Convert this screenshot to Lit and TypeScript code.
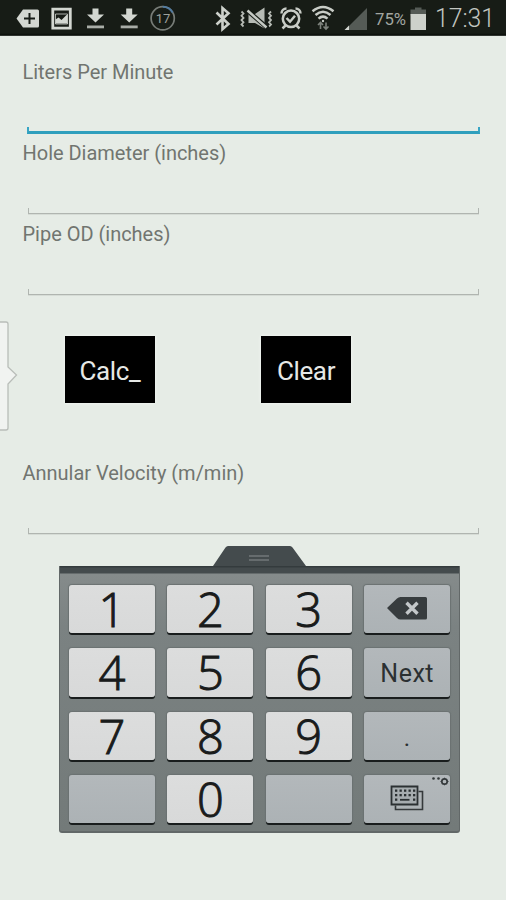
import { LitElement, html, css, svg } from "lit";
import { customElement } from "lit/decorators.js";

@customElement("status-bar")
class StatusBar extends LitElement {
  static styles = css`
    :host { display: block; height: 36px; background: linear-gradient(#171c16 0 33px, #0a0e0a 35px, #555a55 36px); }
    svg { display: block; }
    .txt { font-family: Roboto, sans-serif; }
  `;
  render() {
    const download = (x: number) => svg`<g transform="translate(${x} 0)">
      <path d="M-3 8.500h6v6h5.500L0 22.500-8.500 14.500H-3z" fill="#d3d7d1"/><path d="M-8.500 25.500h17v2.800h-17z" fill="#a9ada7"/></g>`;
    return html`<svg width="506" height="36" viewBox="0 0 506 36">
      <path d="M23 9.500h14.500q1.500 0 1.500 1.500v15q0 1.500-1.500 1.500H23l-6.500-9z" fill="#d3d7d1"/>
      <path d="M29.500 13v11M24 18.500h11" stroke="#171c16" stroke-width="2"/>
      <path d="M52.800 9.200h17.500v19H52.800z" fill="none" stroke="#d3d7d1" stroke-width="2.800"/>
      <path d="M55.500 14h12v10h-12z" fill="none" stroke="#d3d7d1" stroke-width=".8"/>
      <path d="M55.500 23.500v-4l3-2 3 2.500 5-5h1v8.500z" fill="#d3d7d1"/>
      ${download(95.500)}${download(129.200)}
      <circle cx="162.700" cy="18.300" r="11.600" fill="none" stroke="#777c77" stroke-width="1.700"/>
      <path d="M162.700 6.700a11.600 11.600 0 0 1 10 5.800" fill="none" stroke="#527ba0" stroke-width="1.900"/>
      <text class="txt" x="163" y="23" font-size="13" text-anchor="middle" fill="#9da19c">17</text>
      <path d="M216.500 12.500l12 11.500-6 5.200V8l6 5.200-12 11.300" fill="none" stroke="#cdd1cb" stroke-width="2.600"/>
      <path d="M241.500 11.500l2 2-2 2.200 2 2.200-2 2.200 2 2.200-2 2.200 2 2M271 11.500l-2 2 2 2.200-2 2.200 2 2.200-2 2.200 2 2.200-2 2" stroke="#b6bab4" fill="none" stroke-width="1.800"/>
      <path d="M248.500 14h6.500l9.500-6.500V28.500L255 23h-6.500z" fill="#b6bab4"/>
      <path d="M245.500 9l22 19" stroke="#171c16" stroke-width="4.500"/><path d="M247.500 10.500l19 17" stroke="#c6cac4" stroke-width="2.500"/>
      <g stroke="#c8ccc6" fill="none" stroke-width="2.500">
        <circle cx="291" cy="18.800" r="8.200"/><path d="M286.500 18l3.500 3.700 5-6M285.500 25.500l-3 3M296.500 25.500l3 3"/>
        <path d="M281.500 13.500a5 5 0 0 1 5-5M300.500 13.500a5 5 0 0 0-5-5"/>
      </g>
      <g stroke="#c8ccc6" fill="none" stroke-width="2.500">
        <path d="M312.500 11.200q10.500-8.500 21 0M315.500 15q7.500-6.500 15 0M318.500 18.600q4.500-4 9 0"/>
        <circle cx="323" cy="21" r="1.200" fill="#c8ccc6" stroke="none"/>
      </g>
      <path d="M320.500 29v-6M318 25l2.500-2.500L323 25M326 22.500v6M323.500 26.500l2.500 2.500 2.500-2.500" stroke="#7d827c" fill="none" stroke-width="1.600"/>
      <path d="M367 8v22h-22z" fill="#555b56"/><path d="M349 25.500V30h-4.500z" fill="#d3d7d1"/>
      <text class="txt" x="375" y="24.700" font-size="16" textLength="31" lengthAdjust="spacingAndGlyphs" fill="#a2a6a1">75%</text>
      <path d="M415 7.500h6.500v2h4.500v6h-15.500v-6h4.500z" fill="#555b56"/><path d="M410.500 14h15.500v16h-15.500z" fill="#cdd1cb"/>
      <text class="txt" x="435" y="27" font-size="26" font-weight="300" textLength="60" lengthAdjust="spacingAndGlyphs" fill="#c3c7c1">17:31</text>
    </svg>`;
  }
}

@customElement("text-field")
class TextField extends LitElement {
  static properties = { label: {}, active: { type: Boolean, reflect: true } };
  declare label: string;
  declare active: boolean;
  static styles = css`
    :host { display: block; height: 81px; font: 20px/24px Roboto, sans-serif; letter-spacing: -.02px; color: #717570; }
    .label { padding-left: 22.500px; height: 67px; }
    .line { margin: 0 28px; height: 6px; box-sizing: border-box; border: 1px solid #b0b5b0; border-top: 0; width: 451px; box-shadow: 0 1px 0 #d6dcd6; }
    :host([active]) .line { margin-left: 27px; width: 453px; border: 2px solid #38a5c4; border-top: 0; border-bottom: 3px solid #2f9fbd; height: 7px; box-shadow: none; }
  `;
  render() {
    return html`<div class="label">${this.label}</div><div class="line"></div>`;
  }
}

@customElement("key-pad")
class KeyPad extends LitElement {
  static styles = css`
    :host { display: block; width: 401px; }
    .tab { display: block; margin-left: 154px; }
    .board { box-sizing: border-box; height: 267px; border: solid #626868; border-width: 0 1px 2px; border-radius: 0 0 3px 3px;
      background: linear-gradient(#343b3d 0 1px, #444b4d 2px 7px, #858b8b 8px, #7b8282 60px, #737a79);
      padding: 19px 9px 0; display: grid; grid-template-columns: repeat(4, 86px); column-gap: 12.400px; grid-auto-rows: 48.300px; row-gap: 15px; }
    .key { border-radius: 3px; background: linear-gradient(#dcdddd, #d8d9d9); box-shadow: 0 2px 0 #191d1d, 0 0 1px 1px #6b7272;
      display: flex; align-items: center; justify-content: center; font: 300 47px/48px "Open Sans", sans-serif; color: #191b1b; -webkit-text-stroke: 1px #191b1b; }
    .fn { background: linear-gradient(#b3b8bb, #acb2b5); font: 25px/48px Roboto, sans-serif; letter-spacing: .5px; color: #2b3032; -webkit-text-stroke: 0; }
    .fn span { transform: translateY(1.500px); }
    .dot { font-size: 24px; }
    .key svg { display: block; }
  `;
  render() {
    const digit = (n: number) => html`<div class="key"><span>${n}</span></div>`;
    const dots = [0, 1, 2].map((r) => [0, 1, 2, 3, 4].map((c) =>
      r === 2 && c > 0 && c < 4 ? "" : svg`<rect x=${31 + c * 4.500} y=${14.500 + r * 4.500} width="2.300" height="2.300" fill="#2b3032"/>`));
    return html`
      <svg class="tab" width="93" height="20" viewBox="0 0 93 20"><path d="M0 20L12.500 1.500q1-1.500 2.500-1.500H77q1.500 0 2.500 1.500L93 20z" fill="#444b4d"/>
        <path d="M36 10h20M36 14h20" stroke="#727879" stroke-width="1.300"/></svg>
      <div class="board">
        ${digit(1)}${digit(2)}${digit(3)}
        <div class="key fn"><svg width="86" height="48"><path d="M23 23L33 13.500q1.500-1.500 3.500-1.500H61.500q1.500 0 1.500 1.500v19.500q0 1.500-1.500 1.500H36.500q-2 0-3.500-1.500z" fill="#373c3e"/>
          <path d="M42.500 17.800l11 11M53.500 17.800l-11 11" stroke="#c3c7c9" stroke-width="3.400"/></svg></div>
        ${digit(4)}${digit(5)}${digit(6)}<div class="key fn"><span>Next</span></div>
        ${digit(7)}${digit(8)}${digit(9)}<div class="key fn dot"><span>.</span></div>
        <div class="key fn"></div>${digit(0)}<div class="key fn"></div>
        <div class="key fn"><svg width="86" height="48"><path d="M54.500 16.500h4v18h-27v-4" fill="none" stroke="#35393b" stroke-width="1.600"/>
          <path d="M27.500 11.500h26v18h-26z" fill="#a6acaf" stroke="#2b3032" stroke-width="1.800"/>${dots}
          <path d="M36 24.800h9.500" stroke="#2b3032" stroke-width="1.800"/>
          <circle cx="69.500" cy="3.500" r="1.300" fill="#34393b"/><circle cx="74.500" cy="3.500" r="1.300" fill="#34393b"/>
          <circle cx="80.500" cy="6.500" r="2.700" fill="none" stroke="#34393b" stroke-width="1.700"/><path d="M76.500 6.500h8M80.500 2.700v7.600" stroke="#34393b" stroke-width="1" stroke-dasharray="1.500 5"/></svg></div>
      </div>`;
  }
}

@customElement("app-root")
class AppRoot extends LitElement {
  static styles = css`
    :host { display: block; position: relative; width: 506px; height: 900px; background: #e6ece6; overflow: hidden; }
    .form { padding-top: 24px; }
    .buttons { display: flex; gap: 106px; padding: 33px 0 0 65px; }
    .btn { box-sizing: border-box; width: 90px; height: 67px; border: 0; padding: 3px 0 0; background: #000; color: #e6e8e6; font: 26px/64px Roboto, sans-serif; letter-spacing: -.35px; text-align: center; box-shadow: 0 0 3px #f6faf6; }
    .result { padding-top: 58px; }
    .pad { margin: 4px 0 0 59px; }
    .drawer { position: absolute; left: 0; top: 320px; }
  `;
  render() {
    return html`
      <status-bar></status-bar>
      <div class="form">
        <text-field label="Liters Per Minute" active></text-field>
        <text-field label="Hole Diameter (inches)"></text-field>
        <text-field label="Pipe OD (inches)"></text-field>
      </div>
      <div class="buttons"><button class="btn">Calc_</button><button class="btn">Clear</button></div>
      <div class="result"><text-field label="Annular Velocity (m/min)"></text-field></div>
      <key-pad class="pad"></key-pad>
      <svg class="drawer" width="20" height="112" viewBox="0 0 20 112"><path d="M-2 2H6q2 0 2 2V47l8.500 8L8 64v44q0 2-2 2h-8z" fill="#f1f3f1" stroke="#b9bdb9" stroke-width="1.300"/></svg>`;
  }
}
